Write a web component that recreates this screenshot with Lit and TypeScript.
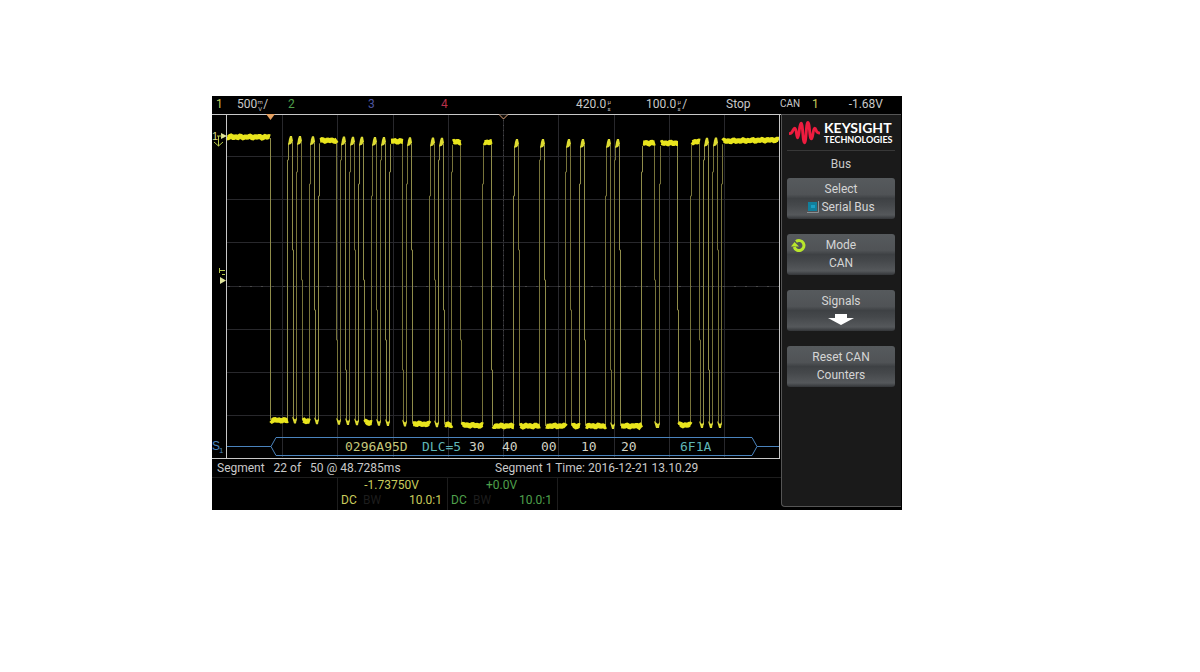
import { LitElement, html, css, svg } from "lit";
import { customElement } from "lit/decorators.js";

/* Time spans, in plot units, during which the CAN line is high: [rise, fall]. */
const HIGH_SPANS: [number, number][] = [
  [288, 293], [297, 302], [310, 315], [319, 337], [341, 346], [350, 355],
  [359, 364], [372, 377], [381, 386], [390, 403], [407, 412], [430, 435],
  [439, 444], [452, 461], [483, 492], [514, 519], [540, 545], [566, 571],
  [580, 585], [606, 611], [615, 620], [642, 655], [660, 678], [691, 700],
  [704, 709], [713, 718], [722, 779],
];

const FRAMES = [
  { x: 345, text: "0296A95D", kind: "id" },
  { x: 422, text: "DLC=5", kind: "meta" },
  { x: 469, text: "30", kind: "data" },
  { x: 502, text: "40", kind: "data" },
  { x: 541, text: "00", kind: "data" },
  { x: 581, text: "10", kind: "data" },
  { x: 621, text: "20", kind: "data" },
  { x: 680, text: "6F1A", kind: "meta" },
];

const highLevel = (x: number) => (x < 288 ? 137 : x < 500 ? 140 + (x - 288) / 90 : x < 690 ? 143 : 142 - (x - 690) / 40);
const lowLevel = (x: number) => (x < 500 ? 420 + (x - 270) / 38 : x < 640 ? 426 : 425);

/* A level drawn with a little sampling noise. */
const level = (from: number, to: number, y: (x: number) => number) => {
  let d = `M${from} ${y(from)}`;
  for (let x = from + 1; x <= to; x++) d += `L${x} ${(y(x) + Math.sin(x * 1.3) * 0.5 + Math.sin(x * 0.7) * 0.4).toFixed(1)}`;
  return d;
};

@customElement("scope-plot")
class ScopePlot extends LitElement {
  static styles = css`
    :host { display: block; }
    svg { display: block; width: 100%; height: auto; }
    .grid { stroke: #28282c; stroke-width: 1; fill: none; }
    .ticks { stroke: #4a4a4a; stroke-width: 1; fill: none; }
    .edge { stroke: #77733a; stroke-width: 1; fill: none; }
    .edge-bright { stroke: #8f8c4a; stroke-width: 1; fill: none; }
    .level { stroke: #e9e51d; stroke-width: 5; fill: none; }
    .cap { fill: #dedc32; }
    .frame { stroke: #c8c8c8; stroke-width: 1; fill: none; }
    .bus { stroke: #4a83bd; stroke-width: 1; fill: none; }
    text { font-family: "DejaVu Sans Mono", monospace; font-size: 13px; }
    .id { fill: #c5c77a; }
    .meta { fill: #5fb5b5; }
    .data { fill: #d2d2c4; }
    .label { font-family: "Liberation Sans", sans-serif; font-size: 12px; fill: #4a83bd; }
    .sub { font-family: "Liberation Sans", sans-serif; font-size: 8px; fill: #4a83bd; }
    .marker { fill: #d9dc86; font-family: "Liberation Sans", sans-serif; font-size: 11px; }
    .ground { stroke: #b7c94a; fill: none; }
    .arrow { fill: #dfe39a; }
    .trigger { fill: #e5a060; }
    .trigger-open { stroke: #e0a67c; fill: #100c08; }
  `;

  render() {
    const falls = [270, ...HIGH_SPANS.map((s) => s[1])];
    return html`
      <svg viewBox="212 113 569 346" role="img" aria-label="CAN bus waveform">
        ${[282, 337, 393, 448, 503, 558, 614, 669, 724].map((x) => svg`<path class="grid" d="M${x}.5 115V457" />`)}
        ${[156, 199, 242, 286, 329, 372, 415].map((y) => svg`<path class="grid" d="M227 ${y}.5H779" />`)}
        <path class="ticks" stroke-dasharray="1 4" d="M503.5 115V457" />
        <path class="ticks" stroke-dasharray="2 9" d="M228 286.5H779" />
        <path class="edge-bright" d="M270.5 138V420" />
        ${HIGH_SPANS.map(([rise, fall], i) => svg`
          <path class=${i % 3 ? "edge" : "edge-bright"} d="M${rise - 1}.5 ${lowLevel(rise)}V${160 + (i % 4) * 12}H${rise}.5V${highLevel(rise) + 3}" />
          ${fall < 779 ? svg`<path class=${i % 2 ? "edge" : "edge-bright"} d="M${fall - 1}.5 ${highLevel(fall) + 2}V${250 + (i % 5) * 30}H${fall}.5V${lowLevel(fall)}" />` : ""}
        `)}
        <path class="level" d=${level(227, 270, highLevel)} />
        ${HIGH_SPANS.map(([rise, fall]) => {
          const y = highLevel(rise);
          return fall - rise < 6
            ? svg`<path class="cap" d="M${rise} ${y + 5}L${rise + 1} ${y - 1}L${rise + 2} ${y - 4}H${fall - 1}L${fall} ${y + 1}L${fall - 2} ${y + 4}Z" />`
            : svg`<path class="level" d=${level(rise + 1, fall, highLevel)} />`;
        })}
        ${HIGH_SPANS.map(([rise], i) => {
          const from = falls[i];
          const y = lowLevel(from);
          return rise - from < 6
            ? svg`<path class="cap" d="M${from - 1} ${y - 4}L${from + 1} ${y + 3}H${rise - 1}L${rise} ${y - 3}L${rise - 2} ${y - 1}Z" />`
            : svg`<path class="level" d=${level(from + 1, rise, lowLevel)} />`;
        })}
        <path class="frame" d="M212 114.5H781M226.5 114V458M779.5 114V458M212 458.5H780" />
        <path class="trigger" d="M266 114H275L270.500 120Z" />
        <path class="trigger-open" d="M499 114.500L503.500 119L508 114.500" />
        <text class="marker" x="212" y="140">1</text>
        <path class="arrow" d="M221 133L227 136L221 139Z" />
        <path class="ground" d="M218.500 136V146M214 142L218.500 146L223 142M217 136H222" />
        <path class="ground" d="M219 270.500H225M219.500 268V273M222 274.500H225" />
        <path class="arrow" d="M220 277L226 280.500L220 284Z" />
        <text class="label" x="212" y="450">S</text>
        <text class="sub" x="219" y="453">1</text>
        <path class="bus" d="M227 446.500H271L276 437.500H752L757 446.500L752 455.500H276L271 446.500M757 446.500H779" />
        ${FRAMES.map((f) => svg`<text class=${f.kind} x=${f.x} y="451">${f.text}</text>`)}
      </svg>
    `;
  }
}

@customElement("app-root")
class AppRoot extends LitElement {
  static styles = css`
    :host {
      display: block;
      box-sizing: border-box;
      min-height: 100vh;
      padding: 96px 298px 0 212px;
      background: #fff;
      font: 12px/16px "Roboto", "Liberation Sans", sans-serif;
      color: #c9c9c9;
    }
    .screen { background: #000; }
    .status { display: grid; grid-template-columns: 21px 51px 80px 73px 135px 70px 80px 54px 32px 1fr; height: 17px; padding-left: 4px; line-height: 16px; white-space: nowrap; }
    .status > span { display: flex; }
    .unit { display: grid; align-content: center; width: 6px; font-size: 6px; line-height: 7px; text-align: center; }
    .status > .small { font-size: 10px; }
    .status > .level { justify-content: space-between; padding: 0 19px 0 0; }
    .ch1 { color: #c9cc5c; }
    .ch2 { color: #4fa04c; }
    .ch3 { color: #4d55a0; }
    .ch4 { color: #b8304a; }
    .body { display: grid; grid-template-columns: 1fr 121px; }
    .segment { display: flex; height: 18px; padding-left: 5px; line-height: 18px; border-bottom: 1px solid #1d1d1d; white-space: pre; }
    .segment span:first-child { width: 278px; }
    .channels { display: grid; grid-template-columns: 125px 111px 110px; height: 32px; }
    .channel { display: grid; grid-template-columns: 22px 1fr auto; align-content: start; line-height: 15px; padding: 0 5px 0 3px; border-right: 1px solid #1d1d1d; }
    .first { border-left: 1px solid #1d1d1d; grid-column: 2; }
    .offset { grid-column: 1 / -1; text-align: center; }
    .dim { color: #1d1d1d; }
    .side { box-sizing: border-box; margin: 1px 1px 3px 0; background: #1a1a1a; border: solid #555; border-width: 1px 0 1px 1px; border-radius: 0 0 0 4px; padding: 0 6px 0 5px; }
    .brand { display: flex; align-items: center; gap: 4px; height: 35px; border-bottom: 1px solid #383838; color: #fff; }
    .brand svg { flex: none; width: 31px; height: 27px; margin-left: 2px; }
    .name, .tech { display: block; font-family: "Lato", sans-serif; font-weight: bold; }
    .name { font-size: 14px; line-height: 13px; }
    .tech { font-size: 9px; line-height: 11px; }
    .title { margin: 0; font: inherit; line-height: 26px; text-align: center; }
    .keys { display: grid; gap: 15px; margin-top: 1px; }
    .key { position: relative; height: 41px; padding: 0 0 2px; border: 0; border-radius: 3px; background: linear-gradient(#565a5d, #505356 40%, #3e4144 50%, #45484b 65%, #55585b 90%, #333538); color: #d5d5d5; font: inherit; line-height: 18px; }
    .key span { display: block; }
    .key .with-box { display: flex; justify-content: center; align-items: center; gap: 2px; }
    .box { width: 12px; height: 12px; }
    .knob { position: absolute; left: 4px; top: 4px; width: 16px; height: 16px; }
    .down { display: block; width: 26px; height: 12px; margin: 4px auto 2px; }
  `;

  render() {
    return html`
      <main class="screen">
        <header class="status">
          <span class="ch1">1</span>
          <span>500<span class="unit"><span>m</span><span>V</span></span>/</span>
          <span class="ch2">2</span>
          <span class="ch3">3</span>
          <span class="ch4">4</span>
          <span>420.0<span class="unit"><span>µ</span><span>s</span></span></span>
          <span>100.0<span class="unit"><span>µ</span><span>s</span></span>/</span>
          <span>Stop</span>
          <span class="small">CAN</span>
          <span class="level"><span class="ch1">1</span><span>-1.68V</span></span>
        </header>
        <div class="body">
          <section>
            <scope-plot></scope-plot>
            <div class="segment"><span>Segment   22 of   50 @ 48.7285ms</span><span>Segment 1 Time: 2016-12-21 13.10.29</span></div>
            <div class="channels">
              <div class="channel first ch1"><span class="offset">-1.73750V</span><span>DC</span><span class="dim">BW</span><span>10.0:1</span></div>
              <div class="channel ch2"><span class="offset">+0.0V</span><span>DC</span><span class="dim">BW</span><span>10.0:1</span></div>
            </div>
          </section>
          <aside class="side">
            <div class="brand">
              <svg viewBox="0 0 32 27" aria-hidden="true"><path fill="none" stroke="#ee1c3f" stroke-width="3" stroke-linejoin="round" stroke-linecap="round" d="M1 14.500C4 14.500 4 9 6 9S7.500 19 9 19S10.500 4 12.500 4S14 24 16 24S17.500 3 19.500 3S21 20 23 20S24.500 9 26.500 9S27 14 31 14" /></svg>
              <span><span class="name">KEYSIGHT</span><span class="tech">TECHNOLOGIES</span></span>
            </div>
            <h2 class="title">Bus</h2>
            <div class="keys">
              <button class="key">
                <span>Select</span>
                <span class="with-box">
                  <svg class="box" viewBox="0 0 12 12" aria-hidden="true"><rect x="1" y="1" width="9" height="9" fill="#117f9c" /><rect x="4" y="4" width="4" height="3" fill="#1b9fc4" /><path d="M0 11.500H11.500V0" fill="none" stroke="#8d9194" /></svg>
                  Serial Bus
                </span>
              </button>
              <button class="key">
                <svg class="knob" viewBox="0 0 16 16" aria-hidden="true"><path d="M5 3.500A5 5 0 1 1 3.200 9" fill="none" stroke="#b9e62c" stroke-width="3" /><path d="M0 8.500L3.500 4L8 8.500Z" fill="#b9e62c" /></svg>
                <span>Mode</span>
                <span>CAN</span>
              </button>
              <button class="key">
                <span>Signals</span>
                <svg class="down" viewBox="0 0 26 12" aria-hidden="true"><path d="M7 0H19V4H26L13 11L0 4H7Z" fill="#fff" /></svg>
              </button>
              <button class="key">
                <span>Reset CAN</span>
                <span>Counters</span>
              </button>
            </div>
          </aside>
        </div>
      </main>
    `;
  }
}
